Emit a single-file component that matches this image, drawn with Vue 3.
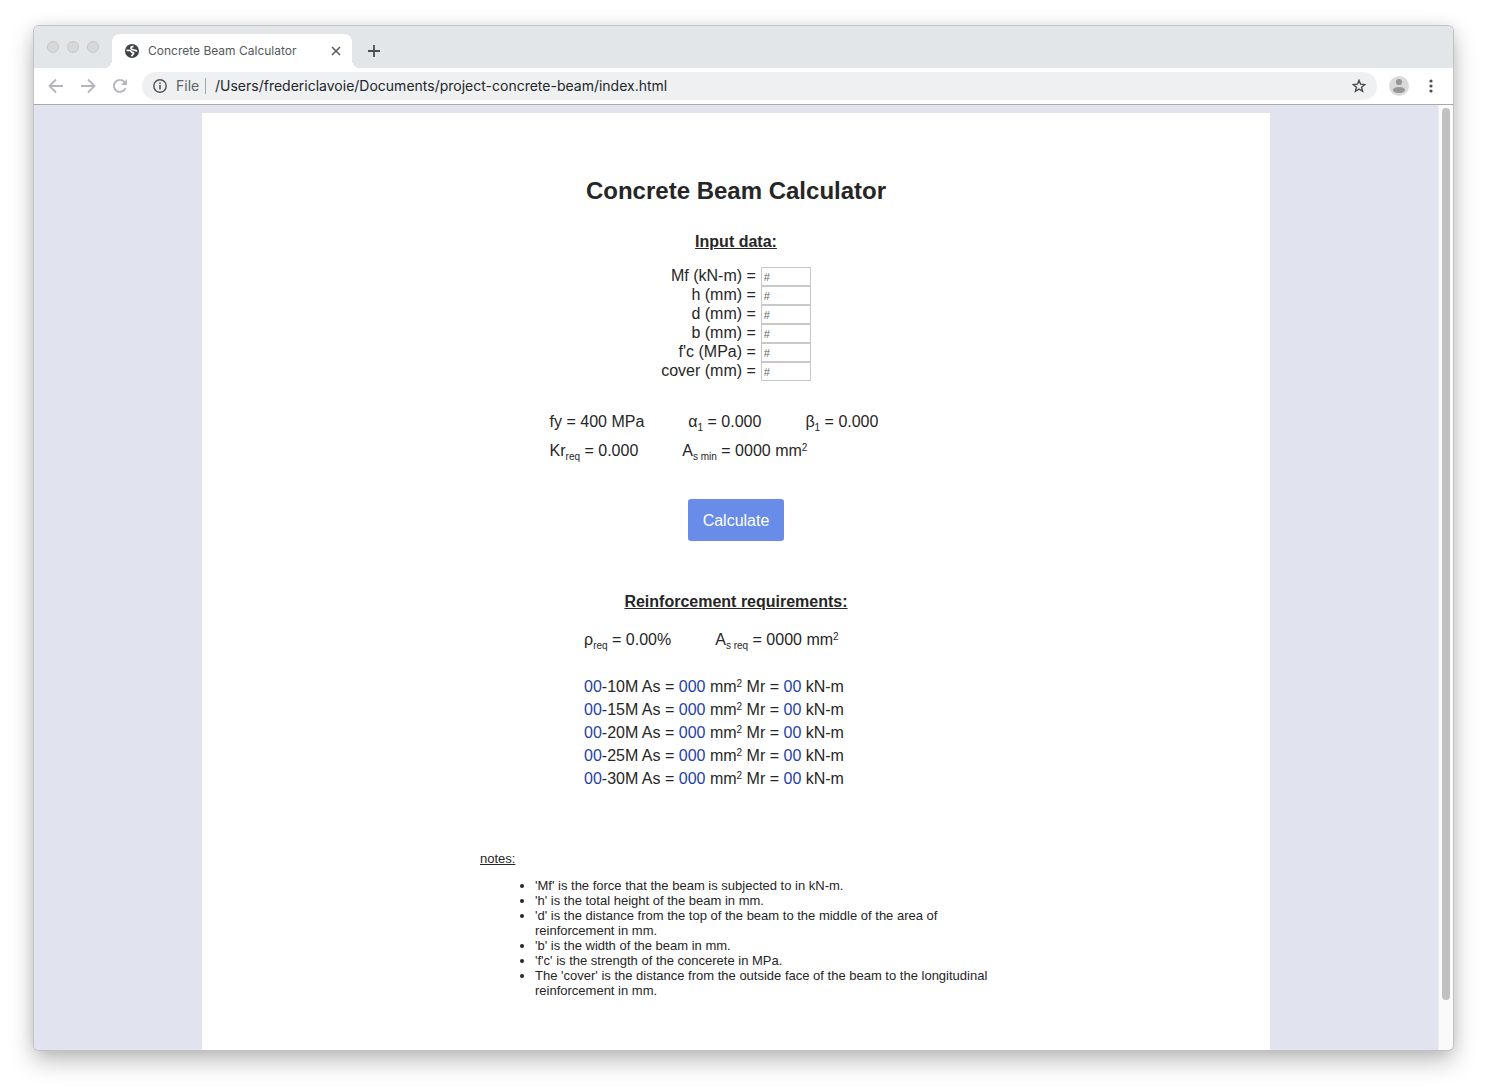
<script setup>
import { ref } from 'vue'

const address = ref('/Users/fredericlavoie/Documents/project-concrete-beam/index.html')

const fields = ref([
  { id: 'mf', label: 'Mf (kN-m) =', value: '' },
  { id: 'h', label: 'h (mm) =', value: '' },
  { id: 'd', label: 'd (mm) =', value: '' },
  { id: 'b', label: 'b (mm) =', value: '' },
  { id: 'fc', label: "f'c (MPa) =", value: '' },
  { id: 'cover', label: 'cover (mm) =', value: '' },
])

const bars = ['10M', '15M', '20M', '25M', '30M']

const notes = [
  "'Mf' is the force that the beam is subjected to in kN-m.",
  "'h' is the total height of the beam in mm.",
  "'d' is the distance from the top of the beam to the middle of the area of reinforcement in mm.",
  "'b' is the width of the beam in mm.",
  "'f'c' is the strength of the concerete in MPa.",
  "The 'cover' is the distance from the outside face of the beam to the longitudinal reinforcement in mm.",
]
</script>

<template>
  <div class="desktop">
    <div class="window">
      <header class="tab-strip">
        <div class="lights">
          <span class="light"></span>
          <span class="light"></span>
          <span class="light"></span>
        </div>
        <div class="tab">
          <svg class="globe" width="14" height="14" viewBox="0 0 14 14" aria-hidden="true">
            <circle cx="7" cy="7" r="7" fill="#3f4347" />
            <path d="M8.500 2.600H7.200C5.400 3 5.600 5.200 7.200 5.500L9 6c1.200.5 1.800 1 3.200.9" fill="none" stroke="#fff" stroke-width="1.700" />
            <path d="M1.600 6.400l3.400.1c1.500.2 1 1.700 2.500 1.900 1.500.1 1.400 1.300.4 1.900L6.500 12.300" fill="none" stroke="#fff" stroke-width="1.700" />
          </svg>
          <span class="tab-title">Concrete Beam Calculator</span>
          <button class="icon-button" type="button" aria-label="Close tab">
            <svg width="10" height="10" viewBox="0 0 10 10"><path d="M1 1l8 8M9 1L1 9" stroke="#55595d" stroke-width="1.5" /></svg>
          </button>
        </div>
        <button class="icon-button new-tab" type="button" aria-label="New tab">
          <svg width="12" height="12" viewBox="0 0 12 12"><path d="M6 0v12M0 6h12" stroke="#4b4f53" stroke-width="1.8" /></svg>
        </button>
      </header>

      <nav class="toolbar">
        <div class="nav-buttons">
          <button class="icon-button" type="button" aria-label="Back">
            <svg width="16" height="16" viewBox="0 0 16 16"><path d="M15 8H2M8 1.500L1.500 8 8 14.500" fill="none" stroke="#b4b6b9" stroke-width="1.800" /></svg>
          </button>
          <button class="icon-button" type="button" aria-label="Forward">
            <svg width="16" height="16" viewBox="0 0 16 16"><path d="M1 8h13M8 1.500L14.500 8 8 14.500" fill="none" stroke="#b4b6b9" stroke-width="1.800" /></svg>
          </button>
          <button class="icon-button" type="button" aria-label="Reload">
            <svg width="16" height="16" viewBox="0 0 16 16"><path d="M13.500 10A6 6 0 1 1 12.300 3.800" fill="none" stroke="#b4b6b9" stroke-width="1.900" /><path d="M15 1v6H9z" fill="#b4b6b9" /></svg>
          </button>
        </div>
        <div class="omnibox">
          <svg width="14" height="14" viewBox="0 0 14 14" aria-hidden="true">
            <circle cx="7" cy="7" r="6.200" fill="none" stroke="#4f5256" stroke-width="1.400" />
            <path d="M7 6v4.500M7 3.400v1.500" stroke="#4f5256" stroke-width="1.500" />
          </svg>
          <label class="scheme" for="address">File</label>
          <input id="address" v-model="address" class="address" type="text" spellcheck="false" />
          <button class="icon-button" type="button" aria-label="Bookmark this page">
            <svg width="14" height="14" viewBox="0 0 14 14"><path d="M7 1.300l1.600 3.900 4.200.3-3.200 2.700 1 4.100L7 10.100l-3.600 2.200 1-4.100L1.200 5.500l4.200-.3z" fill="none" stroke="#4b4f53" stroke-width="1.400" /></svg>
          </button>
        </div>
        <button class="icon-button" type="button" aria-label="Profile">
          <svg width="20" height="20" viewBox="0 0 20 20">
            <circle cx="10" cy="10" r="10" fill="#dadada" />
            <circle cx="10" cy="6" r="3.100" fill="#979797" />
            <ellipse cx="10" cy="14" rx="6" ry="3.100" fill="#979797" />
          </svg>
        </button>
        <button class="icon-button menu" type="button" aria-label="Menu">
          <svg width="4" height="14" viewBox="0 0 4 14" fill="#4b4f53"><circle cx="2" cy="2" r="1.600" /><circle cx="2" cy="7" r="1.600" /><circle cx="2" cy="12" r="1.600" /></svg>
        </button>
      </nav>

      <div class="viewport">
        <div class="canvas">
          <main class="sheet">
            <h1>Concrete Beam Calculator</h1>

            <h2>Input data:</h2>
            <form class="fields" @submit.prevent>
              <template v-for="field in fields" :key="field.id">
                <label :for="field.id">{{ field.label }}</label>
                <input :id="field.id" v-model="field.value" type="text" placeholder="#" />
              </template>
            </form>

            <div class="results">
              <div class="line">
                <span>fy = 400 MPa</span>
                <span>α<sub>1</sub> = 0.000</span>
                <span>β<sub>1</sub> = 0.000</span>
              </div>
              <div class="line">
                <span>Kr<sub>req</sub> = 0.000</span>
                <span>A<sub>s min</sub> = 0000 mm<sup>2</sup></span>
              </div>
            </div>

            <button class="calculate" type="button">Calculate</button>

            <h2>Reinforcement requirements:</h2>
            <div class="results">
              <div class="line">
                <span>ρ<sub>req</sub> = 0.00%</span>
                <span>A<sub>s req</sub> = 0000 mm<sup>2</sup></span>
              </div>
              <div class="bars">
                <div v-for="bar in bars" :key="bar" class="bar">
                  <b>00</b>-{{ bar }} As = <b>000</b> mm<sup>2</sup> Mr = <b>00</b> kN-m
                </div>
              </div>
            </div>

            <section class="notes">
              <u>notes:</u>
              <ul>
                <li v-for="note in notes" :key="note">{{ note }}</li>
              </ul>
            </section>
          </main>
        </div>
        <div class="scrollbar"><div class="thumb"></div></div>
      </div>
    </div>
  </div>
</template>

<style>
body {
  margin: 0;
  background: #fff;
}
</style>

<style scoped>
* {
  box-sizing: border-box;
}

.desktop {
  display: flex;
  height: 100vh;
  padding: 26px 34px 42px;
  overflow: hidden;
}

.window {
  display: flex;
  flex: 1;
  flex-direction: column;
  min-width: 0;
  overflow: hidden;
  border-radius: 5px;
  background: #fff;
  box-shadow: 0 0 0 1px #c0c2c3, 0 10px 24px rgba(0, 0, 0, 0.28), 0 0 14px rgba(0, 0, 0, 0.08);
}

.icon-button {
  display: flex;
  padding: 0;
  border: 0;
  background: none;
}

.tab-strip {
  display: flex;
  flex: none;
  align-items: flex-end;
  height: 42px;
  background: #e2e6e9;
  font-family: Inter, sans-serif;
}

.lights {
  display: flex;
  gap: 8px;
  align-self: center;
  width: 78px;
  padding-left: 13px;
}

.light {
  width: 12px;
  height: 12px;
  border: 1px solid #c6c7c8;
  border-radius: 50%;
  background: #d8d8d8;
}

.tab {
  position: relative;
  display: flex;
  align-items: center;
  width: 240px;
  height: 34px;
  padding: 0 11px 0 13px;
  border-radius: 8px 8px 0 0;
  background: #fff;
}

.tab::before,
.tab::after {
  content: '';
  position: absolute;
  bottom: 0;
  width: 8px;
  height: 8px;
}

.tab::before {
  right: 100%;
  background: radial-gradient(circle at 0 0, transparent 8px, #fff 8px);
}

.tab::after {
  left: 100%;
  background: radial-gradient(circle at 100% 0, transparent 8px, #fff 8px);
}

.tab-title {
  flex: 1;
  margin-left: 9px;
  color: #55595d;
  font-size: 12px;
  line-height: 16px;
}

.new-tab {
  margin: 0 0 11px 16px;
}

.toolbar {
  display: flex;
  flex: none;
  align-items: center;
  height: 37px;
  padding-right: 20px;
  border-bottom: 1px solid #a9a9ad;
  background: #fff;
}

.nav-buttons {
  display: flex;
  gap: 16px;
  width: 108px;
  padding-left: 14px;
}

.omnibox {
  display: flex;
  flex: 1;
  align-items: center;
  height: 28px;
  margin-right: 12px;
  padding: 0 11px;
  border-radius: 14px;
  background: #eff0f2;
  font-family: Inter, sans-serif;
  font-size: 14px;
}

.scheme {
  width: 39px;
  padding-left: 9px;
  border-right: 1px solid #a4a6a9;
  color: #5f6368;
  line-height: 16px;
}

.address {
  flex: 1;
  min-width: 0;
  padding: 0 10px 2px 9px;
  border: 0;
  outline: 0;
  background: none;
  color: #242629;
  font: inherit;
}

.menu {
  margin-left: 20px;
}

.viewport {
  display: flex;
  flex: 1;
  min-height: 0;
}

.canvas {
  display: flex;
  flex: 1;
  justify-content: center;
  min-width: 0;
  padding-top: 8px;
  overflow: hidden;
  background: #e1e4ee;
}

.sheet {
  display: flex;
  flex-direction: column;
  align-items: center;
  width: 76%;
  padding-top: 64px;
  background: #fff;
  color: #262626;
  font: 16px/18px "Liberation Sans", Arial, sans-serif;
}

h1 {
  margin: 0 0 28px;
  font-size: 24px;
  line-height: 28px;
}

h2 {
  margin: 0 0 14px;
  font-size: 16px;
  line-height: 18px;
  text-decoration: underline;
}

.fields {
  display: grid;
  grid-template-columns: auto 50px;
  grid-auto-rows: 19px;
  column-gap: 5px;
  margin: 2px 0 26px;
  text-align: right;
}

.fields input {
  width: 50px;
  height: 19px;
  padding: 1px 2px;
  border: 1px solid #c8c8c8;
  outline: 0;
  background: #fff;
  color: #262626;
  font: 11px/15px "Liberation Sans", Arial, sans-serif;
}

.fields input::placeholder {
  color: #666;
}

.line {
  display: flex;
  line-height: 29px;
  white-space: nowrap;
}

.line span {
  margin-right: 44px;
}

sub,
sup {
  font-size: 10px;
  line-height: 0;
}

sub {
  vertical-align: -4px;
}

sup {
  vertical-align: 5px;
}

.calculate {
  width: 96px;
  height: 42px;
  margin: 34px 0 52px;
  padding: 2px 0 0;
  border: 0;
  border-radius: 3px;
  background: #698ce8;
  color: #fff;
  font: 16px/18px "Liberation Sans", Arial, sans-serif;
}

.bars {
  margin: 21px 44px 0 0;
}

.bar {
  line-height: 23px;
  white-space: nowrap;
}

.bar b {
  color: #1f41a8;
  font-weight: 400;
}

.notes {
  width: 512px;
  margin-top: 61px;
  font-size: 13px;
  line-height: 15px;
}

.notes ul {
  margin: 12px 0 0;
  padding-left: 55px;
}

.scrollbar {
  flex: none;
  width: 15px;
  padding: 3px;
  border-left: 1px solid #ececec;
  background: #fafafa;
}

.thumb {
  width: 8px;
  height: 95%;
  border-radius: 4px;
  background: #c1c1c1;
}
</style>
